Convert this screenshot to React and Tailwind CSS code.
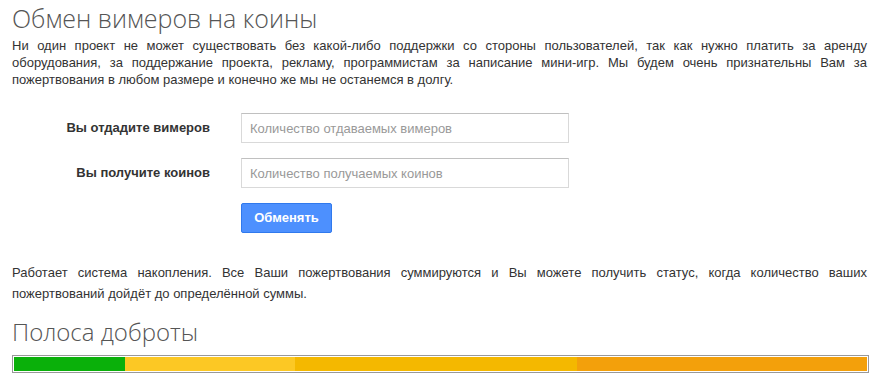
const segments = [
  { width: 111, color: "bg-[#0ab00a]" },
  { width: 170, color: "bg-[#fcc824]" },
  { width: 282, color: "bg-[#f4b800]" },
  { width: 290, color: "bg-[#f3a00b]" },
];

const Field = ({ label, placeholder }) => (
  <div className="flex items-center">
    <label className="w-[198px] text-right text-[13px] font-bold text-[#333]">{label}</label>
    <input
      type="text"
      placeholder={placeholder}
      className="ml-[31px] h-[30px] w-[328px] border border-[#d9d9d9] border-t-[#c0c0c0] px-2 text-[13px] text-[#333] outline-none placeholder:text-[#999]"
    />
  </div>
);

const App = () => {
  return (
    <div className="min-h-screen bg-white px-3 pt-[2px] font-['Liberation_Sans',Arial,sans-serif] text-[#333]">
      <h1 className="font-['Open_Sans',sans-serif] text-[25px] leading-[32px] font-light text-[#555]">
        Обмен вимеров на коины
      </h1>
      <p className="mt-[3px] text-justify text-[13px] leading-[17px]">
        Ни один проект не может существовать без какой-либо поддержки со стороны пользователей, так как нужно платить за
        аренду оборудования, за поддержание проекта, рекламу, программистам за написание мини-игр. Мы будем очень
        признательны Вам за пожертвования в любом размере и конечно же мы не останемся в долгу.
      </p>

      <form className="mt-[25px] flex flex-col gap-[15px]" onSubmit={(event) => event.preventDefault()}>
        <Field label="Вы отдадите вимеров" placeholder="Количество отдаваемых вимеров" />
        <Field label="Вы получите коинов" placeholder="Количество получаемых коинов" />
        <div className="pl-[229px]">
          <button
            type="submit"
            className="h-[30px] w-[91px] rounded-[2px] border border-[#3079ed] bg-[#4d90fe] text-[13px] font-bold text-white"
          >
            Обменять
          </button>
        </div>
      </form>

      <p className="mt-[29px] text-justify text-[13px] leading-[21px]">
        Работает система накопления. Все Ваши пожертвования суммируются и Вы можете получить статус, когда количество
        ваших пожертвований дойдёт до определённой суммы.
      </p>

      <h2 className="mt-[13px] font-['Open_Sans',sans-serif] text-[24px] leading-[30px] font-light text-[#555]">
        Полоса доброты
      </h2>
      <div className="mt-[8px] flex h-[18px] w-[857px] border border-[#999] p-[1px]">
        {segments.map((segment, index) => (
          <div key={index} className={`h-full ${segment.color}`} style={{ width: segment.width }} />
        ))}
      </div>
    </div>
  );
};

export default App;
